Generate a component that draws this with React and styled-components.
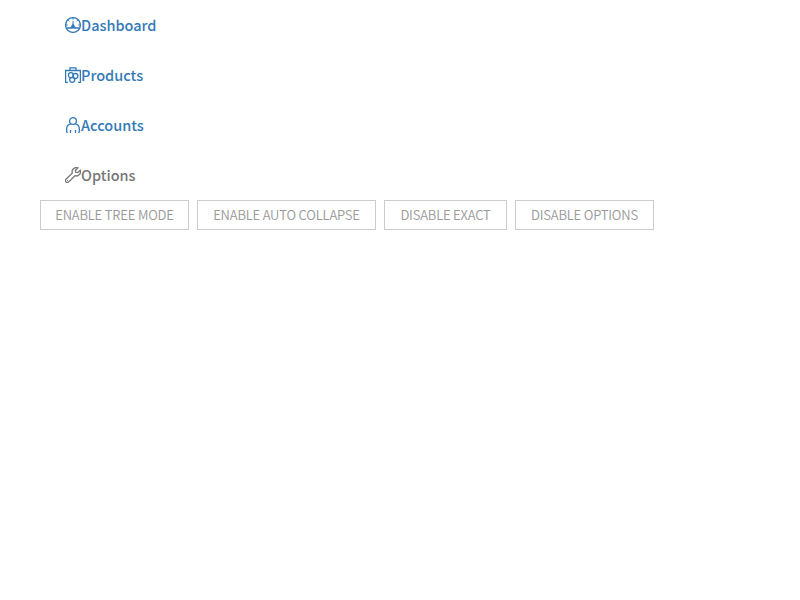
import React from 'react';
import styled, { createGlobalStyle } from 'styled-components';

const GlobalStyle = createGlobalStyle`
  * { box-sizing: border-box; }
  body { margin: 0; background: #fff; font-family: "Noto Sans CJK SC", "Noto Sans", sans-serif; }
`;

const Page = styled.main`
  padding: 0 40px;
`;

const Menu = styled.nav`
  display: flex;
  flex-direction: column;
  width: 250px;
`;

const MenuItem = styled.a`
  display: flex;
  align-items: center;
  height: 50px;
  padding-left: 25px;
  color: ${({ $disabled }) => ($disabled ? '#777' : '#337ab7')};
  font-size: 14.5px;
  font-weight: 500;
  line-height: 20px;
  text-decoration: none;
`;

const Icon = styled.svg`
  flex: none;
  width: 16px;
  height: 16px;
  fill: none;
  stroke: currentColor;
  stroke-width: 1.3;
`;

const Toolbar = styled.div`
  display: flex;
  gap: 8px;
`;

const Button = styled.button`
  width: ${({ $width }) => $width}px;
  height: 30px;
  padding: 0;
  border: 1px solid #ccc;
  border-radius: 0;
  background: #fff;
  color: #999;
  font-family: inherit;
  font-size: 13px;
  font-weight: 350;
  letter-spacing: -0.17px;
  line-height: 28px;
  text-align: center;
  text-transform: uppercase;
  white-space: nowrap;
`;

const DashboardIcon = () => (
  <Icon viewBox="0 0 16 16">
    <circle cx="8" cy="8" r="7.4" />
    <path d="M1.4 11h4.8M9.8 11h4.8" />
    <path strokeWidth="1" d="M8 4v5M8 1v1.7M1 8h1.7M13.3 8H15M3.2 3.2l1.1 1.1M12.8 3.2l-1.1 1.1" />
    <path fill="currentColor" strokeWidth=".6" d="M7.6 7.5 6.2 9.6 5.8 11.3h4.4l-.4-1.7-1.4-2.1z" />
  </Icon>
);

const ProductsIcon = () => (
  <Icon viewBox="0 0 16 16">
    <path d="M3 15.4H.6V3.5h14.8v11.9H13M5 3.5V.9h6v2.6" />
    <circle cx="5.9" cy="8.2" r="2.5" />
    <circle cx="10.4" cy="9" r="2.5" />
    <circle cx="7.2" cy="12.8" r="2.5" />
  </Icon>
);

const AccountsIcon = () => (
  <Icon viewBox="0 0 16 16">
    <circle cx="8" cy="4" r="3.4" />
    <path d="M5.8 6.8C3.1 7.4 1.7 9 1.7 11.5V15l1 .5M10.2 6.8c2.7.6 4.1 2.2 4.1 4.7V15l-1 .5M5.5 13v3M10.5 13v3" />
  </Icon>
);

const OptionsIcon = () => (
  <Icon viewBox="0 0 16 16">
    <path d="M12.9.9a4.2 4.2 0 0 0-5.6 5.2L1 12.2a1.9 1.9 0 0 0 2.8 2.7l6.1-6.2a4.2 4.2 0 0 0 5.3-5.5l-2.5 2.4-2-.4-.4-2z" />
    <path strokeWidth="1" d="M2.1 13.6h1" />
  </Icon>
);

const items = [
  { label: 'Dashboard', Glyph: DashboardIcon },
  { label: 'Products', Glyph: ProductsIcon },
  { label: 'Accounts', Glyph: AccountsIcon },
  { label: 'Options', Glyph: OptionsIcon, disabled: true },
];

const actions = [
  { label: 'Enable tree mode', width: 149 },
  { label: 'Enable auto collapse', width: 179 },
  { label: 'Disable exact', width: 123 },
  { label: 'Disable options', width: 139 },
];

export default function App() {
  return (
    <Page>
      <GlobalStyle />
      <Menu>
        {items.map(({ label, Glyph, disabled }) => (
          <MenuItem key={label} $disabled={disabled}>
            <Glyph />
            <span>{label}</span>
          </MenuItem>
        ))}
      </Menu>
      <Toolbar>
        {actions.map(({ label, width }) => (
          <Button key={label} type="button" $width={width}>{label}</Button>
        ))}
      </Toolbar>
    </Page>
  );
}
